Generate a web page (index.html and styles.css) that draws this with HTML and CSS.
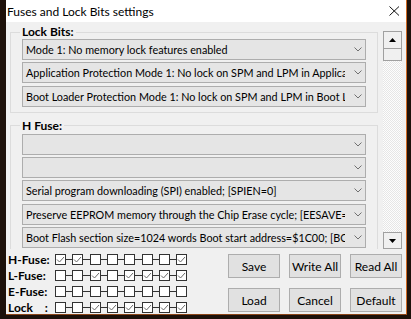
FILE: index.html
```html
<!DOCTYPE html>
<html>
<head>
	<title>Fuses and Lock Bits settings</title>
	<link rel="stylesheet" href="styles.css">
</head>
<body>
	<div class="window">
		<div class="title-bar">
			<span class="title">Fuses and Lock Bits settings</span>
			<svg class="close" width="11" height="10" viewBox="0 0 11 10"><path d="M0.5 0.5 L10 9.5 M10 0.5 L0.5 9.5" stroke="#111" stroke-width="1" fill="none"/></svg>
		</div>
		<div class="content">
			<div class="scroll-area">
				<div class="panel">
					<fieldset class="group">
						<legend>Lock Bits:</legend>
						<div class="combo"><span class="combo-text">Mode 1: No memory lock features enabled</span><svg class="chevron" width="8" height="5" viewBox="0 0 8 5"><path d="M0.5 0.5 L4 4 L7.5 0.5" stroke="#707070" fill="none"/></svg></div>
						<div class="combo"><span class="combo-text">Application Protection Mode 1: No lock on SPM and LPM in Application Section</span><svg class="chevron" width="8" height="5" viewBox="0 0 8 5"><path d="M0.5 0.5 L4 4 L7.5 0.5" stroke="#707070" fill="none"/></svg></div>
						<div class="combo"><span class="combo-text">Boot Loader Protection Mode 1: No lock on SPM and LPM in Boot Loader Section</span><svg class="chevron" width="8" height="5" viewBox="0 0 8 5"><path d="M0.5 0.5 L4 4 L7.5 0.5" stroke="#707070" fill="none"/></svg></div>
					</fieldset>
					<fieldset class="group h-group">
						<legend>H Fuse:</legend>
						<div class="combo"><span class="combo-text"></span><svg class="chevron" width="8" height="5" viewBox="0 0 8 5"><path d="M0.5 0.5 L4 4 L7.5 0.5" stroke="#707070" fill="none"/></svg></div>
						<div class="combo"><span class="combo-text"></span><svg class="chevron" width="8" height="5" viewBox="0 0 8 5"><path d="M0.5 0.5 L4 4 L7.5 0.5" stroke="#707070" fill="none"/></svg></div>
						<div class="combo"><span class="combo-text">Serial program downloading (SPI) enabled; [SPIEN=0]</span><svg class="chevron" width="8" height="5" viewBox="0 0 8 5"><path d="M0.5 0.5 L4 4 L7.5 0.5" stroke="#707070" fill="none"/></svg></div>
						<div class="combo"><span class="combo-text">Preserve EEPROM memory through the Chip Erase cycle; [EESAVE=0]</span><svg class="chevron" width="8" height="5" viewBox="0 0 8 5"><path d="M0.5 0.5 L4 4 L7.5 0.5" stroke="#707070" fill="none"/></svg></div>
						<div class="combo"><span class="combo-text">Boot Flash section size=1024 words Boot start address=$1C00; [BOOTSZ=00]</span><svg class="chevron" width="8" height="5" viewBox="0 0 8 5"><path d="M0.5 0.5 L4 4 L7.5 0.5" stroke="#707070" fill="none"/></svg></div>
					</fieldset>
				</div>
				<div class="scrollbar">
					<div class="sb-btn"><svg width="7" height="4" viewBox="0 0 7 4"><path d="M3.5 0 L7 4 L0 4 Z" fill="#000"/></svg></div>
					<div class="sb-thumb"></div>
					<div class="sb-track"></div>
					<div class="sb-btn sb-down"><svg width="7" height="4" viewBox="0 0 7 4"><path d="M0 0 L7 0 L3.5 4 Z" fill="#000"/></svg></div>
				</div>
			</div>
			<div class="bottom">
				<div id="fuses" class="fuse-rows"></div>
				<div class="buttons">
					<button>Save</button>
					<button>Write All</button>
					<button>Read All</button>
					<button>Load</button>
					<button>Cancel</button>
					<button>Default</button>
				</div>
			</div>
		</div>
	</div>

<script type="text/javascript">
	const fuses = [
		{label:'H-Fuse:', bits:'11000001'},
		{label:'L-Fuse:', bits:'00101111'},
		{label:'E-Fuse:', bits:'00000000'},
		{label:'Lock    :', bits:'00111111'}
	]
	const checkSvg = '<svg width="9" height="9" viewBox="0 0 9 9"><path d="M1 4.5 L3.5 7 L8 2" stroke="#6a6a6a" fill="none"/></svg>'

	function render(){
		const container = document.getElementById('fuses')
		fuses.forEach(function(f){
			let row = document.createElement('div')
			row.className = 'fuse-row'
			let label = document.createElement('span')
			label.className = 'fuse-label'
			label.innerText = f.label
			row.appendChild(label)
			let bits = document.createElement('div')
			bits.className = 'bits'
			f.bits.split('').forEach(function(b, i){
				if (i > 0){
					let link = document.createElement('span')
					link.className = 'link'
					bits.appendChild(link)
				}
				let box = document.createElement('span')
				box.className = 'bit'
				if (b === '1'){ box.innerHTML = checkSvg }
				bits.appendChild(box)
			})
			row.appendChild(bits)
			container.appendChild(row)
		})
	}

	render()
</script>
</body>
</html>
```

FILE: styles.css
```css
body{
	margin: 0;
	background: #1d110a;
	font-family: Lato, "Liberation Sans", sans-serif;
	font-size: 10.8px;
	color: #000;
}
.window{
	margin-left: 6px;
	width: 400px;
	height: 314px;
	background: #f0f0f0;
	border-right: 1px solid #cf6a24;
	border-bottom: 1px solid #8a4518;
	display: flex;
	flex-direction: column;
}
.title-bar{
	height: 22px;
	flex: none;
	background: #fff;
	display: flex;
	align-items: center;
	justify-content: space-between;
	padding-left: 1px;
	font-size: 12px;
}
.close{
	margin-right: 6px;
}
.content{
	flex: 1;
	display: flex;
	flex-direction: column;
}
.scroll-area{
	height: 227px;
	flex: none;
	display: flex;
}
.panel{
	flex: 1;
	overflow: hidden;
	padding: 3px 0 0 4px;
}
.group{
	margin: 0 5px 6px 0;
	padding: 0 11px 5px;
	border: 1px solid #dcdcdc;
	min-width: 0;
}
.group legend{
	padding: 0 2px;
	margin-left: -2px;
	line-height: 14px;
	font-weight: bold;
	font-size: 12px;
}
.h-group{
	padding-top: 1px;
}
.combo{
	height: 21px;
	box-sizing: border-box;
	border: 1px solid #adadad;
	background: #e5e5e5;
	display: flex;
	align-items: center;
}
.combo + .combo{
	margin-top: 2.33px;
}
.combo-text{
	flex: 1;
	overflow: hidden;
	white-space: nowrap;
	padding-left: 3px;
	line-height: 19px;
}
.chevron{
	flex: none;
	margin: 0 3px 0 9px;
}
.scrollbar{
	width: 19px;
	margin: 9px 4px 0 0;
	display: flex;
	flex-direction: column;
}
.sb-btn{
	height: 18px;
	box-sizing: border-box;
	border: 1px solid #a0a0a0;
	background: #f0f0f0;
	display: flex;
	align-items: center;
	justify-content: center;
	flex: none;
}
.sb-down{
	height: 17px;
}
.sb-thumb{
	height: 12px;
	box-sizing: border-box;
	border: 1px solid #a0a0a0;
	border-top: none;
	background: #f0f0f0;
	flex: none;
}
.sb-track{
	flex: 1;
	background: repeating-conic-gradient(#fdfdfd 0 25%, #e6e6e6 0 50%) 0 0 / 2px 2px;
}
.bottom{
	flex: 1;
	display: flex;
	justify-content: space-between;
	padding: 5px 4px 0 2px;
}
.fuse-row{
	height: 16px;
	display: flex;
	align-items: flex-start;
}
.fuse-label{
	width: 47px;
	font-weight: bold;
	font-size: 12px;
	line-height: 12px;
	white-space: pre;
}
.bits{
	display: flex;
	align-items: center;
	height: 11px;
}
.bit{
	width: 11px;
	height: 11px;
	box-sizing: border-box;
	border: 1px solid #333;
	background: #fff;
	display: flex;
}
.bit svg{
	display: block;
}
.link{
	width: 6.33px;
	height: 1px;
	background: #333;
}
.buttons{
	display: grid;
	grid-template-columns: repeat(3, 52px);
	grid-auto-rows: 24px;
	column-gap: 9px;
	row-gap: 10px;
	align-content: start;
}
.buttons button{
	border: 1px solid #adadad;
	background: #e1e1e1;
	font-family: inherit;
	font-size: 12px;
	color: #000;
	padding: 0;
}
```
